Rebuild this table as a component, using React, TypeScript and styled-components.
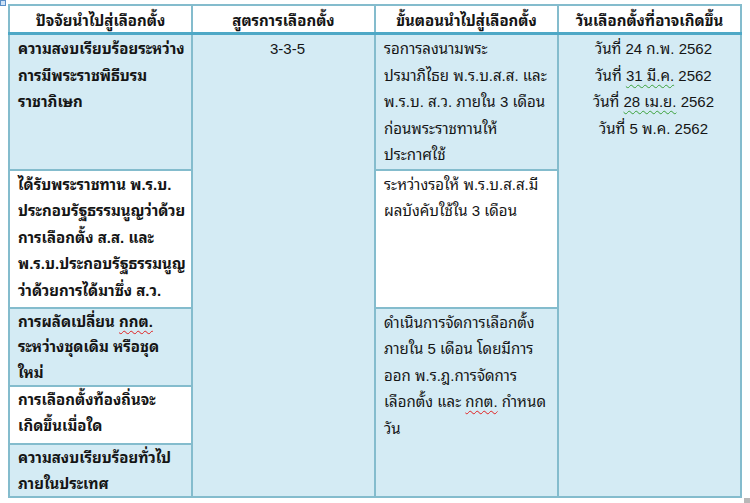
import React, { FC } from 'react';
import styled, { createGlobalStyle } from 'styled-components';

const GlobalStyle = createGlobalStyle`
  body {
    margin: 0;
    background: #ffffff;
    font-family: "Liberation Sans", "Noto Sans Thai Looped", Loma, Garuda, Tahoma, "Noto Sans Thai", sans-serif;
    color: #151515;
  }
`;

const Page = styled.div`
  position: relative;
  width: 750px;
  height: 503px;
  padding: 4px 0 0 8px;
  box-sizing: border-box;
  overflow: hidden;
`;

const MoveHandle = styled.div`
  position: absolute;
  left: 0;
  top: 0;
  width: 6px;
  height: 6px;
  border: 1px solid #5a8fc8;
  background: #cfe2f6;
  box-sizing: border-box;
`;

const ResizeHandle = styled.div`
  position: absolute;
  left: 744px;
  top: 498px;
  width: 6px;
  height: 5px;
  background: #b8b8b8;
`;

const Table = styled.table`
  width: 734px;
  border-collapse: collapse;
  table-layout: fixed;
  font-size: 15px;
`;

const Col = styled.col`
  width: 25%;
`;

const HeadCell = styled.th`
  height: 26px;
  padding: 0;
  border: 2px solid #84bccd;
  border-bottom: 3px solid #4ea8c6;
  background: #ffffff;
  font-weight: bold;
  font-size: 15px;
  text-align: center;
  white-space: nowrap;
  overflow: hidden;
`;

const Cell = styled.td<{
  $tone: 'blue' | 'white';
  $bold?: boolean;
  $center?: boolean;
  $tight?: boolean;
}>`
  vertical-align: top;
  padding: ${(p) => (p.$tight ? '0' : '1px')} 0 0 8px;
  border: 2px solid #84bccd;
  background: ${(p) => (p.$tone === 'blue' ? '#d4ebf4' : '#ffffff')};
  font-weight: ${(p) => (p.$bold ? 'bold' : 'normal')};
  text-align: ${(p) => (p.$center ? 'center' : 'left')};
  line-height: ${(p) => (p.$tight ? '25.5px' : '26.5px')};
  white-space: nowrap;
  overflow: hidden;
`;

const Row = styled.tr<{ $h: number }>`
  height: ${(p) => p.$h}px;
`;

const Line = styled.div``;

const Check = styled.span<{ $kind: 'grammar' | 'spell' }>`
  text-decoration: underline wavy ${(p) => (p.$kind === 'grammar' ? '#3aa03a' : '#e02020')};
  text-decoration-thickness: 1px;
  text-underline-offset: 3px;
`;

const Lines: FC<{ lines: React.ReactNode[] }> = ({ lines }) => (
  <>
    {lines.map((l, i) => (
      <Line key={i}>{l}</Line>
    ))}
  </>
);

const App: FC = () => (
  <Page>
    <GlobalStyle />
    <MoveHandle />
    <Table>
      <colgroup>
        <Col />
        <Col />
        <Col />
        <Col />
      </colgroup>
      <thead>
        <tr>
          <HeadCell>ปัจจัยนำไปสู่เลือกตั้ง</HeadCell>
          <HeadCell>สูตรการเลือกตั้ง</HeadCell>
          <HeadCell>ขั้นตอนนำไปสู่เลือกตั้ง</HeadCell>
          <HeadCell>วันเลือกตั้งที่อาจเกิดขึ้น</HeadCell>
        </tr>
      </thead>
      <tbody>
        <Row $h={135}>
          <Cell $tone="blue" $bold>
            <Lines lines={['ความสงบเรียบร้อยระหว่าง', 'การมีพระราชพิธีบรม', 'ราชาภิเษก']} />
          </Cell>
          <Cell $tone="blue" $center rowSpan={5}>
            3-3-5
          </Cell>
          <Cell $tone="blue">
            <Lines
              lines={[
                'รอการลงนามพระ',
                'ปรมาภิไธย พ.ร.บ.ส.ส. และ',
                'พ.ร.บ. ส.ว. ภายใน 3 เดือน',
                'ก่อนพระราชทานให้',
                'ประกาศใช้',
              ]}
            />
          </Cell>
          <Cell $tone="blue" $center rowSpan={5}>
            <Lines
              lines={[
                'วันที่ 24 ก.พ. 2562',
                <>
                  วันที่ <Check $kind="grammar">31 มี.ค.</Check> 2562
                </>,
                <>
                  วันที่ <Check $kind="grammar">28 เม.ย.</Check> 2562
                </>,
                'วันที่ 5 พ.ค. 2562',
              ]}
            />
          </Cell>
        </Row>
        <Row $h={138}>
          <Cell $tone="white" $bold>
            <Lines
              lines={[
                'ได้รับพระราชทาน พ.ร.บ.',
                'ประกอบรัฐธรรมนูญว่าด้วย',
                'การเลือกตั้ง ส.ส. และ',
                'พ.ร.บ.ประกอบรัฐธรรมนูญ',
                'ว่าด้วยการได้มาซึ่ง ส.ว.',
              ]}
            />
          </Cell>
          <Cell $tone="white">
            <Lines lines={['ระหว่างรอให้ พ.ร.บ.ส.ส.มี', 'ผลบังคับใช้ใน 3 เดือน']} />
          </Cell>
        </Row>
        <Row $h={78}>
          <Cell $tone="blue" $bold $tight>
            <Lines
              lines={[
                <>
                  การผลัดเปลี่ยน <Check $kind="spell">กกต.</Check>
                </>,
                'ระหว่างชุดเดิม หรือชุด',
                'ใหม่',
              ]}
            />
          </Cell>
          <Cell $tone="blue" rowSpan={3}>
            <Lines
              lines={[
                'ดำเนินการจัดการเลือกตั้ง',
                'ภายใน 5 เดือน โดยมีการ',
                'ออก พ.ร.ฎ.การจัดการ',
                <>
                  เลือกตั้ง และ <Check $kind="spell">กกต.</Check> กำหนด
                </>,
                'วัน',
              ]}
            />
          </Cell>
        </Row>
        <Row $h={58}>
          <Cell $tone="white" $bold $tight>
            <Lines lines={['การเลือกตั้งท้องถิ่นจะ', 'เกิดขึ้นเมื่อใด']} />
          </Cell>
        </Row>
        <Row $h={52}>
          <Cell $tone="blue" $bold $tight>
            <Lines lines={['ความสงบเรียบร้อยทั่วไป', 'ภายในประเทศ']} />
          </Cell>
        </Row>
      </tbody>
    </Table>
    <ResizeHandle />
  </Page>
);

export default App;
